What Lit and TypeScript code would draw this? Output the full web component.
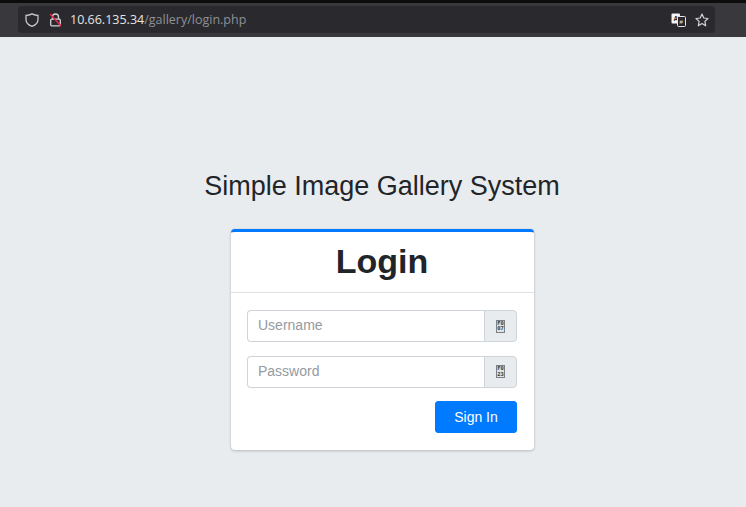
import { LitElement, html, css } from "lit";
import { customElement } from "lit/decorators.js";

@customElement("app-root")
export class AppRoot extends LitElement {
  static styles = css`
    :host { display: block; width: 746px; height: 507px; overflow: hidden; background: #e9ecef; font-family: "Liberation Sans", Arial, sans-serif; color: #212529; }
    .chrome { height: 37px; box-sizing: border-box; background: #38383d; border-top: 3px solid #0c0c0d; padding: 3px 31px 1px 18px; display: flex; }
    .urlbar { flex: 1; background: #2a2a2e; border-radius: 4px; display: flex; align-items: center; padding: 0 6px 0 7px; height: 27px; }
    .urlbar svg { display: block; flex: none; }
    .shield { margin-right: 10px; }
    .lock { margin-right: 8px; }
    .url { font-family: "Open Sans", sans-serif; font-size: 12.5px; color: #e4e4e6; white-space: nowrap; flex: 1; }
    .url span { color: #8f8f94; }
    .translate { margin-right: 9px; }
    .page { display: flex; flex-direction: column; align-items: center; padding: 132px 0 0 19px; }
    h2 { margin: 0 1px 26px 0; font-size: 27px; font-weight: 400; line-height: 34px; }
    .card { width: 303px; box-sizing: border-box; background: #fff; border-top: 3px solid #007bff; border-radius: 4px; box-shadow: 0 0 1px rgba(0,0,0,.125), 0 1px 3px rgba(0,0,0,.2); }
    .head { height: 61px; box-sizing: border-box; border-bottom: 1px solid #dee2e6; text-align: center; }
    h1 { margin: 0 1px 0 0; font-size: 34px; font-weight: 700; line-height: 58px; }
    .body { padding: 17px 17px 17px 16px; display: flex; flex-direction: column; }
    .group { display: flex; height: 32px; margin-bottom: 13.5px; }
    .input { flex: 1; box-sizing: border-box; border: 1px solid #ced4da; border-right: 0; border-radius: 4px 0 0 4px; padding: 0 10px; font-size: 14px; line-height: 29px; color: #959ba1; }
    .addon { width: 33px; box-sizing: border-box; background: #e9ecef; border: 1px solid #ced4da; border-radius: 0 4px 4px 0; display: flex; align-items: center; justify-content: center; }
    .tofu { width: 9px; height: 13px; box-sizing: border-box; border: 1px solid #7b8187; background: #dfe2e5; font-family: "DejaVu Sans Mono", monospace; font-size: 5.5px; font-weight: 700; line-height: 5px; text-align: center; color: #343a40; overflow: hidden; }
    .tofu div { height: 5.5px; }
    .actions { display: flex; justify-content: flex-end; }
    button { width: 82px; height: 32px; border: 1px solid #007bff; border-radius: 3px; background: #007bff; color: #fff; font: 14px "Liberation Sans", Arial, sans-serif; padding: 0; }
  `;

  tofu(a: string, b: string) {
    return html`<div class="tofu"><div>${a}</div><div>${b}</div></div>`;
  }

  render() {
    return html`
      <div class="chrome">
        <div class="urlbar">
          <svg class="shield" width="14" height="14" viewBox="0 0 14 14" fill="none" stroke="#c8c8cb" stroke-width="1.3"><path d="M7 .8 C5 1.8 3.2 2.3 1 2.4 V6.5 C1 9.6 3.8 12.2 7 13.4 C10.2 12.2 13 9.6 13 6.5 V2.4 C10.8 2.3 9 1.8 7 .8 Z"/></svg>
          <svg class="lock" width="13" height="14" viewBox="0 0 13 14" fill="none"><path d="M3.5 6 V4 a3 3 0 0 1 6 0 V6" stroke="#d4d4d6" stroke-width="1.3"/><rect x="1.7" y="6.2" width="9.6" height="6.6" rx="1" stroke="#d4d4d6" stroke-width="1.3"/><path d="M1 1 L12 13" stroke="#e22850" stroke-width="1.5"/></svg>
          <div class="url">10.66.135.34<span>/gallery/login.php</span></div>
          <svg class="translate" width="15" height="14" viewBox="0 0 15 14"><rect x="0.5" y="0.5" width="8.5" height="10" rx="1" fill="#f4f4f5"/><text x="2.4" y="8" font-size="6.5" font-family="Liberation Sans" font-weight="700" fill="#222">A</text><rect x="6.5" y="3.5" width="8" height="10" rx="1" fill="#2a2a2e" stroke="#e4e4e6"/><text x="8.6" y="11" font-size="6" font-family="Liberation Sans" fill="#e4e4e6">#</text></svg>
          <svg width="14" height="14" viewBox="0 0 14 14" fill="none" stroke="#d4d4d6" stroke-width="1.2" stroke-linejoin="round"><path d="M7 1 L8.8 5 L13 5.5 L9.9 8.4 L10.7 12.8 L7 10.6 L3.3 12.8 L4.1 8.4 L1 5.5 L5.2 5 Z"/></svg>
        </div>
      </div>
      <div class="page">
        <h2>Simple Image Gallery System</h2>
        <div class="card">
          <div class="head"><h1>Login</h1></div>
          <div class="body">
            <div class="group"><div class="input">Username</div><div class="addon">${this.tofu("F0", "07")}</div></div>
            <div class="group"><div class="input">Password</div><div class="addon">${this.tofu("F0", "23")}</div></div>
            <div class="actions"><button>Sign In</button></div>
          </div>
        </div>
      </div>
    `;
  }
}
